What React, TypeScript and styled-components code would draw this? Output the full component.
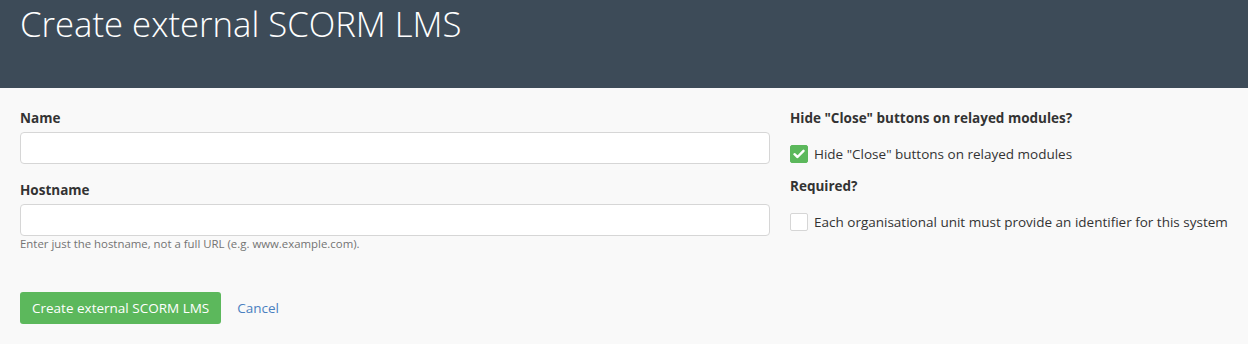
import React, { useState } from 'react';
import styled, { createGlobalStyle } from 'styled-components';

const GlobalStyle = createGlobalStyle`
  html, body {
    margin: 0;
    padding: 0;
    background: #f9f9f9;
    font-family: 'Open Sans', 'Liberation Sans', sans-serif;
    color: #333;
  }
  * { box-sizing: border-box; }
`;

const PageHeader = styled.header`
  background: #3d4b58;
  height: 88px;
  padding: 0 20px;
`;

const PageTitle = styled.h1`
  margin: 0;
  color: #fff;
  font-size: 34.7px;
  font-weight: 300;
  line-height: 48px;
`;

const Form = styled.form`
  padding: 20px 20px 0;
`;

const Columns = styled.div`
  display: grid;
  grid-template-columns: 750px 1fr;
  column-gap: 20px;
`;

const Column = styled.div`
  display: flex;
  flex-direction: column;
`;

const Group = styled.div`
  margin-bottom: 16px;
`;

const Label = styled.label`
  display: block;
  font-size: 13.5px;
  font-weight: 700;
  line-height: 20px;
  margin-bottom: 4px;
  color: #333;
`;

const TextInput = styled.input`
  display: block;
  width: 100%;
  height: 32px;
  padding: 6px 10px;
  border: 1px solid #d6d6d6;
  border-radius: 4px;
  background: #fff;
  font-family: inherit;
  font-size: 13.5px;
  outline: none;
`;

const HelpText = styled.p`
  margin: 0;
  font-size: 11.4px;
  line-height: 16px;
  color: #737373;
`;

const CheckRow = styled.label`
  display: flex;
  align-items: center;
  gap: 6px;
  font-size: 13.5px;
  line-height: 20px;
  color: #333;
  margin: 12px 0;
  cursor: pointer;
`;

const CheckBox = styled.span<{ $checked?: boolean }>`
  display: inline-flex;
  align-items: center;
  justify-content: center;
  width: 18px;
  height: 18px;
  border-radius: 2px;
  border: 1px solid ${({ $checked }) => ($checked ? '#5cb85c' : '#d6d6d6')};
  background: ${({ $checked }) => ($checked ? '#5cb85c' : '#fff')};
`;

const Actions = styled.div`
  display: flex;
  align-items: center;
  gap: 16px;
  margin-top: 24px;
`;

const PrimaryButton = styled.button`
  height: 32px;
  padding: 0 12px;
  border: none;
  border-radius: 3px;
  background: #5cb85c;
  color: #fff;
  font-family: inherit;
  font-size: 13.5px;
`;

const CancelLink = styled.a`
  color: #4a80c0;
  font-size: 13.5px;
  text-decoration: none;
`;

function Check({ checked, onToggle, children }: { checked: boolean; onToggle: () => void; children: React.ReactNode }) {
  return (
    <CheckRow onClick={onToggle}>
      <CheckBox $checked={checked}>
        {checked && (
          <svg width="12" height="10" viewBox="0 0 12 10">
            <path d="M1.5 5.2 L4.5 8 L10.5 1.8" fill="none" stroke="#fff" strokeWidth="2.4" strokeLinecap="round" strokeLinejoin="round" />
          </svg>
        )}
      </CheckBox>
      {children}
    </CheckRow>
  );
}

export default function App() {
  const [hideClose, setHideClose] = useState(true);
  const [required, setRequired] = useState(false);

  return (
    <>
      <GlobalStyle />
      <PageHeader>
        <PageTitle>Create external SCORM LMS</PageTitle>
      </PageHeader>
      <Form onSubmit={(e) => e.preventDefault()}>
        <Columns>
          <Column>
            <Group>
              <Label>Name</Label>
              <TextInput type="text" />
            </Group>
            <Group>
              <Label>Hostname</Label>
              <TextInput type="text" />
              <HelpText>Enter just the hostname, not a full URL (e.g. www.example.com).</HelpText>
            </Group>
          </Column>
          <Column>
            <Label>Hide "Close" buttons on relayed modules?</Label>
            <Check checked={hideClose} onToggle={() => setHideClose(!hideClose)}>
              Hide "Close" buttons on relayed modules
            </Check>
            <Label>Required?</Label>
            <Check checked={required} onToggle={() => setRequired(!required)}>
              Each organisational unit must provide an identifier for this system
            </Check>
          </Column>
        </Columns>
        <Actions>
          <PrimaryButton type="submit">Create external SCORM LMS</PrimaryButton>
          <CancelLink href="#">Cancel</CancelLink>
        </Actions>
      </Form>
    </>
  );
}
